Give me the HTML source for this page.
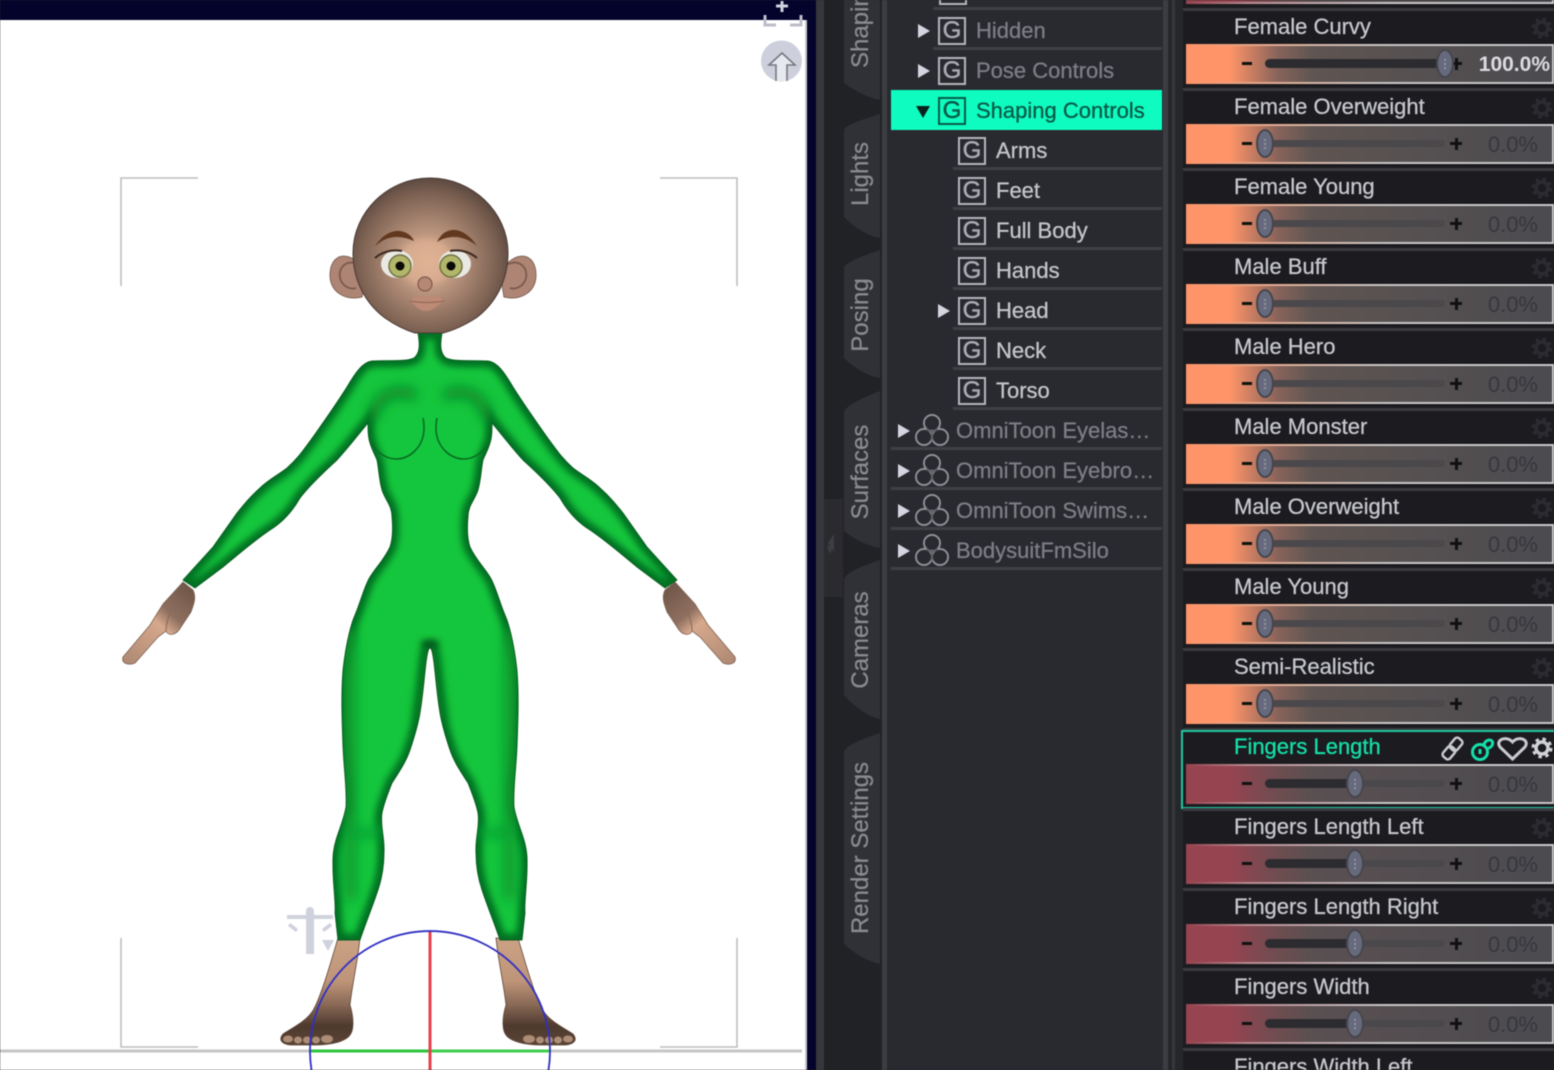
<!DOCTYPE html>
<html><head><meta charset="utf-8"><style>
html,body{margin:0;padding:0;width:1554px;height:1070px;overflow:hidden;background:#26272b}
*{box-sizing:border-box}
body{position:relative;font-family:"Liberation Sans",sans-serif}
#w{position:absolute;left:0;top:0;width:1554px;height:1070px;overflow:hidden;filter:blur(.55px)}
.a{position:absolute}
.tab{position:absolute;left:861px;color:#8a8b91;font-size:24px;white-space:nowrap;transform:translate(-50%,-50%) rotate(-90deg);-webkit-text-stroke:.25px #8a8b91}
.t{position:absolute;height:40px;left:891px;width:271px;color:#7d7e85;font-size:22px;line-height:41px;white-space:nowrap;-webkit-text-stroke:.3px currentColor}
.t .l{position:absolute;bottom:0;right:0;height:3px;background:#3e3f44}
.t .n{position:absolute;top:0}
.t .c{color:#c4c5ca}
.t .g{position:absolute;top:7px;width:28px;height:28px;border:2.5px solid #b5b6bd;color:#a9aab2;font-size:24px;line-height:23px;text-align:center;-webkit-text-stroke:.5px currentColor}
.t .ar{position:absolute;top:14px;width:0;height:0;border-left:12px solid #d4d5e0;border-top:7px solid transparent;border-bottom:7px solid transparent}
.r{position:absolute;left:1183px;width:371px;height:80px;background:#1b1b20;border-top:3px solid #3a3b40}
.r .n{position:absolute;left:51px;top:2px;font-size:22px;line-height:28px;color:#c6c7cc;white-space:nowrap;-webkit-text-stroke:.3px currentColor}
.r .b{position:absolute;left:3px;top:33px;width:368px;height:40px;padding:2px;background:linear-gradient(90deg,#ff9468 0,#e8a585 60px,#c8c8c8 200px)}
.r .b i{display:block;height:36px;background:linear-gradient(90deg,#ff9468 0,#ff9468 42px,#86635a 90px,#5f5552 125px,#4b4b50 100%)}
.f .b{background:linear-gradient(90deg,#964450 0,#b88a8e 60px,#c8c8c8 200px)}
.f .b i{background:linear-gradient(90deg,#964450 0,#964450 42px,#6e4d50 90px,#5a5052 125px,#4b4b50 100%)}
.tr{position:absolute;left:82px;top:49px;width:180px;height:7px;border-radius:4px;background:#4a484b}
.on{position:absolute;left:82px;top:48px;height:9px;border-radius:5px;background:#2c2c30}
.k{position:absolute;top:38px;width:18px;height:29px;margin-left:-9px;border-radius:50%;background:#666a7c;border:2px solid #45464e}
.k:after{content:"";position:absolute;left:6px;top:8px;height:10px;border-left:2px dotted #8f93a4}
.mi{position:absolute;left:59px;top:51px;width:10px;height:3px;background:#111}
.pl{position:absolute;left:267px;top:51px;width:12px;height:3px;background:#111}
.pl:after{content:"";position:absolute;left:4.5px;top:-4.5px;width:3px;height:12px;background:#111}
.v{position:absolute;right:16px;top:41px;font-size:22px;line-height:26px;color:#36363c}
.ge{position:absolute;right:1px;top:6px;width:22px;height:22px;color:#2b2b31}
</style></head><body><div id="w">
<svg class="a" style="left:0;top:0" width="0" height="0"><defs>
<symbol id="gr" viewBox="0 0 34 34"><g fill="none" stroke="#909198" stroke-width="2"><circle cx="17" cy="10" r="8"/><circle cx="9" cy="24" r="8"/><circle cx="25" cy="24" r="8"/></g><g fill="#292a2f"><circle cx="17" cy="10" r="7"/><circle cx="9" cy="24" r="7"/><circle cx="25" cy="24" r="7"/></g><path d="M17,18V28M11,16L17,19 23,16" fill="none" stroke="#55565c" stroke-width="1.500"/></symbol>
<symbol id="ge" viewBox="0 0 22 22"><circle cx="11" cy="11" r="6" fill="none" stroke="currentColor" stroke-width="3.5"/><circle cx="11" cy="11" r="9" fill="none" stroke="currentColor" stroke-width="3" stroke-dasharray="3.5 3.6"/></symbol>
<linearGradient id="sk" x1="0" x2="0" y1="938" y2="1045" gradientUnits="userSpaceOnUse"><stop offset="0" stop-color="#cca285"/><stop offset=".4" stop-color="#bf9579"/><stop offset=".62" stop-color="#8a6a56"/><stop offset=".82" stop-color="#4e3a2e"/><stop offset="1" stop-color="#5a4436"/></linearGradient>
<linearGradient id="hd" x1="190" x2="125" y1="585" y2="660" gradientUnits="userSpaceOnUse"><stop offset="0" stop-color="#6e5547"/><stop offset=".35" stop-color="#8f7060"/><stop offset=".5" stop-color="#d6a88c"/><stop offset="1" stop-color="#b08a74"/></linearGradient>
<radialGradient id="he" cx="428" cy="262" r="92" gradientUnits="userSpaceOnUse"><stop offset="0" stop-color="#dfb092"/><stop offset=".35" stop-color="#b6917b"/><stop offset=".75" stop-color="#7c6152"/><stop offset="1" stop-color="#4d3d37"/></radialGradient>
<path id="bd" d="M418,333 C420,345 420,353 414,358 C405,362 385,360 372,361 C362,362 354,375 347,387 C335,406 325,420 313,437 C302,452 298,458 287,468 C278,475 268,480 260,488 C250,497 245,503 237,513 L213,547 L183,580 L195,588 L223,567 C240,553 255,540 270,530 C283,522 292,512 300,498 C306,490 315,480 337,460 C348,448 358,435 368,423 C368,430 368,437 370,443 C372,450 375,455 377,460 C379,470 379,480 382,490 C385,500 392,505 392,517 C393,528 393,538 390,547 C384,560 376,567 370,577 C365,585 362,597 357,610 L353,620 C348,635 345,652 343,670 C341,695 342,720 343,747 C344,770 347,790 346,807 C343,825 334,838 333,857 C332,880 336,900 335,913 L338,940 L360,940 C365,925 372,908 378,890 C382,878 384,866 384,853 C385,838 380,826 382,813 C384,803 388,793 392,783 C399,772 406,762 410,750 C414,738 418,725 420,713 C423,695 424,680 426,663 C427,655 428,648 430,648 C432,648 433,655 434,663 C436,680 437,695 440,713 C442,725 446,738 450,750 C454,762 461,772 468,783 C472,793 476,803 478,813 C480,826 475,838 476,853 C476,866 478,878 482,890 C488,908 495,925 500,940 L522,940 L525,913 C524,900 528,880 527,857 C526,838 517,825 514,807 C513,790 516,770 517,747 C518,720 519,695 517,670 C515,652 512,635 507,620 L503,610 C498,597 495,585 490,577 C484,567 476,560 470,547 C467,538 467,528 468,517 C468,505 475,500 478,490 C481,480 481,470 483,460 C485,455 488,450 490,443 C492,437 492,430 492,423 C502,435 512,448 523,460 C545,480 554,490 560,498 C568,512 577,522 590,530 C605,540 620,553 637,567 L665,588 L677,580 L647,547 L623,513 C615,503 610,497 600,488 C592,480 582,475 573,468 C562,458 558,452 547,437 C535,420 525,406 513,387 C506,375 498,362 488,361 C475,360 455,362 446,358 C440,353 440,345 442,333 Z"/>
<clipPath id="bc"><use href="#bd"/></clipPath>
<filter id="b3" filterUnits="userSpaceOnUse" x="0" y="0" width="860" height="1070"><feGaussianBlur stdDeviation="3.5"/></filter>
<filter id="b5" filterUnits="userSpaceOnUse" x="0" y="0" width="860" height="1070"><feGaussianBlur stdDeviation="6"/></filter>
<g id="foot">
<path d="M338,938 L360,938 C358,960 352,985 350,1005 C354,1018 354,1030 350,1035 C345,1042 330,1045 315,1045 L290,1045 C282,1044 278,1040 283,1034 C292,1028 305,1022 312,1012 C320,1000 330,965 338,938Z" fill="url(#sk)" stroke="#5a4436" stroke-width=".8"/>
<g fill="#c9a68c" opacity=".75"><ellipse cx="288" cy="1039" rx="5" ry="3.500"/><ellipse cx="298" cy="1040" rx="4" ry="3.500"/><ellipse cx="307" cy="1040" rx="4" ry="3.500"/><ellipse cx="316" cy="1040" rx="4" ry="3.500"/><ellipse cx="327" cy="1039" rx="6" ry="4"/></g>
</g>
<g id="hand"><path d="M183,582 L193,590 C197,598 193,606 191,612 L181,627 C176,636 168,636 166,631 L158,637 L135,663 C128,666 121,663 123,657 L150,625 L163,604Z" fill="url(#hd)" stroke="#7d6252" stroke-width=".8"/><path d="M172,607C168,618 166,624 166,631" fill="none" stroke="#8a6a58"/></g>
<g id="ear"><path d="M366,272 C350,248 330,253 330,275 C330,292 345,301 362,297Z" fill="#ae8575" stroke="#806356" stroke-width="1"/><path d="M360,265 C346,258 338,268 340,278 C342,286 350,290 356,288" fill="none" stroke="#7c5a4e" stroke-width="1.800"/></g>
<g id="bre"><path d="M371,442 C377,454 388,459 396,459 C410,459 423,447 424,430 C424,426 424,422 423,418" fill="none" stroke="#0a6c22" stroke-width="1.600"/></g>
</defs></svg>

<!-- viewport -->
<div class="a" style="left:0;top:0;width:816px;height:1070px;background:#03032c"></div>
<div class="a" style="left:0;top:20px;width:807px;height:1050px;background:#fff;border-right:2px solid #c9c9cd"></div>
<svg class="a" style="left:0;top:0" width="816" height="1070">
<g fill="none" stroke="#bdbdc0" stroke-width="1.6">
<path d="M198,178H121V286"/><path d="M660,178H737V286"/><path d="M121,938V1047H198"/><path d="M737,938V1047H660"/>
</g>
<rect x="0" y="1049.500" width="802" height="3" fill="#c6c6c6"/>
<!-- small figure -->
<g fill="#cfd2dc"><rect x="306" y="912" width="8" height="42"/><circle cx="310" cy="911" r="4"/><rect x="287" y="915" width="46" height="4"/><path d="M290,923l8,6-2,3-8-6zM330,923l-8,6 2,3 8-6z"/><path d="M322,940h12l-6,11z"/></g>
<use href="#foot"/>
<use href="#foot" transform="translate(856,0) scale(-1,1)"/>
<use href="#hand"/>
<use href="#hand" transform="translate(858,0) scale(-1,1)"/>
<use href="#bd" fill="#14c63d"/>
<g clip-path="url(#bc)">
<use href="#bd" fill="none" stroke="#067024" stroke-width="13" filter="url(#b3)"/>
<path d="M350,630V900M510,630V900" fill="none" stroke="#0a9a2e" stroke-width="12" filter="url(#b5)"/>
<path d="M420,720Q427,680 430,648Q433,680 440,720" fill="none" stroke="#087a24" stroke-width="10" filter="url(#b5)"/>
<path d="M422,644H438" stroke="#06561a" stroke-width="7" filter="url(#b3)"/>
<path d="M372,420 C376,396 395,386 416,396M488,420 C484,396 465,386 444,396" fill="none" stroke="#0a8428" stroke-width="10" filter="url(#b5)"/>
<path d="M348,828C360,836 372,836 386,828M512,828C500,836 488,836 474,828" fill="none" stroke="#0e9e33" stroke-width="8" filter="url(#b5)"/>
</g>
<use href="#bd" fill="none" stroke="#0a5e1e" stroke-width=".9"/>
<use href="#bre"/><use href="#bre" transform="translate(860,0) scale(-1,1)"/>
<use href="#ear"/><use href="#ear" transform="translate(866,0) scale(-1,1)"/>
<!-- head -->
<path d="M430,178 C388,178 353,212 353,253 C353,280 365,303 385,318 C395,325 405,330 415,333 L443,333 C455,330 465,325 476,318 C496,303 508,280 508,253 C508,212 472,178 430,178 Z" fill="url(#he)" stroke="#4a3a34" stroke-width="1"/>
<ellipse cx="426" cy="262" rx="28" ry="24" fill="#e4b698" opacity=".6" filter="url(#b3)"/>
<path d="M375,246C382,235 392,230 400,231C407,232 412,236 414,241C407,238 402,237 396,237C388,237 381,241 375,246Z" fill="#62391f"/>
<path d="M477,246C470,235 460,229 452,230C444,231 440,236 437,242C443,238 449,237 455,237C463,237 471,241 477,246Z" fill="#62391f"/>
<ellipse cx="397" cy="264" rx="16" ry="14" fill="#e9e8e2"/><ellipse cx="455" cy="264" rx="16" ry="14" fill="#e9e8e2"/>
<circle cx="400" cy="266" r="11" fill="#b2b66a" stroke="#6f7440" stroke-width="1.500"/><circle cx="451" cy="266" r="11" fill="#b2b66a" stroke="#6f7440" stroke-width="1.500"/>
<circle cx="400" cy="266" r="4.500" fill="#0a0a08"/><circle cx="451" cy="266" r="4.500" fill="#0a0a08"/>
<path d="M375,258C382,252 392,249 402,251" fill="none" stroke="#3b2a20" stroke-width="2"/><path d="M477,258C470,252 460,249 450,251" fill="none" stroke="#3b2a20" stroke-width="2"/>
<circle cx="425" cy="284" r="7" fill="#b58876" stroke="#80594c" stroke-width="1.200"/>
<path d="M410,301C416,295 422,295 426,297C431,295 437,295 444,301C438,305 433,311 426,311C419,311 415,305 410,301Z" fill="#bd8a76"/>
<path d="M410,301C420,303 434,303 444,301" stroke="#8e6354" fill="none"/>
<!-- gizmo -->
<path d="M310,1051H550" stroke="#3fce4e" stroke-width="3"/><path d="M310,1051H430" stroke="#2cc33b" stroke-width="3"/>
<path d="M430,932V1070" stroke="#e8404c" stroke-width="3"/>
<path d="M311.500,1070A120,120 0 1 1 548.500,1070" fill="none" stroke="#3030c4" stroke-width="1.800"/>
<!-- top right icons -->
<path d="M782,1v11M776,6h12" stroke="#cfd2dc" stroke-width="3"/>
<path d="M765,15v10h11M801,15v10h-11" fill="none" stroke="#bcbec8" stroke-width="3"/>
<circle cx="781.500" cy="61" r="20.500" fill="#cdd0dc"/>
<path d="M776,81V65H769L782,53 795,65H787V81" fill="#e8e9f0" stroke="#77787f" stroke-width="1.600"/>
</svg>

<!-- tabs column -->
<div class="a" style="left:816px;top:0;width:8px;height:1070px;background:#36373c"></div>
<div class="a" style="left:824px;top:0;width:58px;height:1070px;background:#212226"></div>
<div class="a" style="left:824px;top:499px;width:19px;height:98px;background:#2a2a2f"></div>
<div class="a" style="left:882px;top:0;width:5px;height:1070px;background:#3c3d42"></div>
<svg class="a" style="left:824px;top:0" width="58" height="1070">
<g fill="#303136">
<path d="M20,0H56V100Q38,96 20,83Z"/>
<path d="M20,130Q20,125 56,114V238Q38,235 20,217Z"/>
<path d="M20,268Q20,262 56,250V378Q38,375 20,358Z"/>
<path d="M20,413Q20,405 56,391V548Q38,545 20,531Z"/>
<path d="M20,580Q20,572 56,560V719Q38,715 20,695Z"/>
<path d="M20,752Q20,745 56,733V964Q38,960 20,944Z"/>
</g>
<path d="M10,534l-6,9 6,9zM3,546l3,8 3-8z" fill="#3d3e44"/>
</svg>
<div class="tab" style="top:24px">Shaping</div>
<div class="tab" style="top:174px">Lights</div>
<div class="tab" style="top:315px">Posing</div>
<div class="tab" style="top:472px">Surfaces</div>
<div class="tab" style="top:640px">Cameras</div>
<div class="tab" style="top:848px">Render Settings</div>

<!-- tree -->
<div class="a" style="left:887px;top:0;width:276px;height:1070px;background:#292a2f"></div>
<div class="a" style="left:1163px;top:0;width:5px;height:1070px;background:#3c3d42"></div>
<div class="a" style="left:1168px;top:0;width:15px;height:1070px;background:#26272b"></div>
<div class="a" style="left:1172px;top:0;width:3px;height:1070px;background:#36373c"></div>
<div class="t" style="top:-30px"><div class="l" style="left:42px"></div><div class="g" style="left:48px"></div></div>
<div class="t" style="top:10px"><div class="l" style="left:42px"></div><div class="ar" style="left:27px"></div><div class="g" style="left:47px">G</div><div class="n" style="left:85px">Hidden</div></div>
<div class="t" style="top:50px"><div class="ar" style="left:27px"></div><div class="g" style="left:47px">G</div><div class="n" style="left:85px">Pose Controls</div></div>
<div class="t" style="top:90px;background:#0ffcc0;color:#075a48"><div class="ar" style="left:25px;top:16px;border:0;border-top:12px solid #07211c;border-left:7px solid transparent;border-right:7px solid transparent"></div><div class="g" style="left:47px;border-color:#075a48;color:#075a48">G</div><div class="n" style="left:85px">Shaping Controls</div></div>
<div class="t" style="top:130px"><div class="l" style="left:62px"></div><div class="g" style="left:67px">G</div><div class="n c" style="left:105px">Arms</div></div>
<div class="t" style="top:170px"><div class="l" style="left:62px"></div><div class="g" style="left:67px">G</div><div class="n c" style="left:105px">Feet</div></div>
<div class="t" style="top:210px"><div class="l" style="left:62px"></div><div class="g" style="left:67px">G</div><div class="n c" style="left:105px">Full Body</div></div>
<div class="t" style="top:250px"><div class="l" style="left:62px"></div><div class="g" style="left:67px">G</div><div class="n c" style="left:105px">Hands</div></div>
<div class="t" style="top:290px"><div class="l" style="left:62px"></div><div class="ar" style="left:47px"></div><div class="g" style="left:67px">G</div><div class="n c" style="left:105px">Head</div></div>
<div class="t" style="top:330px"><div class="l" style="left:62px"></div><div class="g" style="left:67px">G</div><div class="n c" style="left:105px">Neck</div></div>
<div class="t" style="top:370px"><div class="l" style="left:62px"></div><div class="g" style="left:67px">G</div><div class="n c" style="left:105px">Torso</div></div>
<div class="t" style="top:410px"><div class="l" style="left:0"></div><div class="ar" style="left:7px"></div><svg class="a" style="left:24px;top:3px" width="34" height="34"><use href="#gr"/></svg><div class="n" style="left:65px">OmniToon Eyelas…</div></div>
<div class="t" style="top:450px"><div class="l" style="left:0"></div><div class="ar" style="left:7px"></div><svg class="a" style="left:24px;top:3px" width="34" height="34"><use href="#gr"/></svg><div class="n" style="left:65px">OmniToon Eyebro…</div></div>
<div class="t" style="top:490px"><div class="l" style="left:0"></div><div class="ar" style="left:7px"></div><svg class="a" style="left:24px;top:3px" width="34" height="34"><use href="#gr"/></svg><div class="n" style="left:65px">OmniToon Swims…</div></div>
<div class="t" style="top:530px"><div class="l" style="left:0"></div><div class="ar" style="left:7px"></div><svg class="a" style="left:24px;top:3px" width="34" height="34"><use href="#gr"/></svg><div class="n" style="left:65px">BodysuitFmSilo</div></div>

<!-- sliders -->
<div class="r f" style="top:-72px"><div class="b"><i></i></div></div>
<div class="r" style="top:8px"><div class="n">Female Curvy</div><div class="b"><i></i></div><div class="mi"></div><div class="tr"></div><div class="pl"></div><div class="on" style="width:180px"></div><div class="k" style="left:262px"></div><div class="v" style="color:#dcdce0;font-weight:bold;right:4px;font-size:21px">100.0%</div><svg class="ge"><use href="#ge"/></svg></div>
<div class="r" style="top:88px"><div class="n">Female Overweight</div><div class="b"><i></i></div><div class="mi"></div><div class="tr"></div><div class="k" style="left:82px"></div><div class="pl"></div><div class="v">0.0%</div><svg class="ge"><use href="#ge"/></svg></div>
<div class="r" style="top:168px"><div class="n">Female Young</div><div class="b"><i></i></div><div class="mi"></div><div class="tr"></div><div class="k" style="left:82px"></div><div class="pl"></div><div class="v">0.0%</div><svg class="ge"><use href="#ge"/></svg></div>
<div class="r" style="top:248px"><div class="n">Male Buff</div><div class="b"><i></i></div><div class="mi"></div><div class="tr"></div><div class="k" style="left:82px"></div><div class="pl"></div><div class="v">0.0%</div><svg class="ge"><use href="#ge"/></svg></div>
<div class="r" style="top:328px"><div class="n">Male Hero</div><div class="b"><i></i></div><div class="mi"></div><div class="tr"></div><div class="k" style="left:82px"></div><div class="pl"></div><div class="v">0.0%</div><svg class="ge"><use href="#ge"/></svg></div>
<div class="r" style="top:408px"><div class="n">Male Monster</div><div class="b"><i></i></div><div class="mi"></div><div class="tr"></div><div class="k" style="left:82px"></div><div class="pl"></div><div class="v">0.0%</div><svg class="ge"><use href="#ge"/></svg></div>
<div class="r" style="top:488px"><div class="n">Male Overweight</div><div class="b"><i></i></div><div class="mi"></div><div class="tr"></div><div class="k" style="left:82px"></div><div class="pl"></div><div class="v">0.0%</div><svg class="ge"><use href="#ge"/></svg></div>
<div class="r" style="top:568px"><div class="n">Male Young</div><div class="b"><i></i></div><div class="mi"></div><div class="tr"></div><div class="k" style="left:82px"></div><div class="pl"></div><div class="v">0.0%</div><svg class="ge"><use href="#ge"/></svg></div>
<div class="r" style="top:648px"><div class="n">Semi-Realistic</div><div class="b"><i></i></div><div class="mi"></div><div class="tr"></div><div class="k" style="left:82px"></div><div class="pl"></div><div class="v">0.0%</div><svg class="ge"><use href="#ge"/></svg></div>
<div class="r f" style="top:728px"><div class="n" style="color:#15dfa9">Fingers Length</div><div class="b"><i></i></div><div class="mi"></div><div class="tr"></div><div class="on" style="width:90px"></div><div class="k" style="left:172px"></div><div class="pl"></div><div class="v">0.0%</div>
<svg class="a" style="left:255px;top:5px" width="94" height="28" fill="none">
<g transform="translate(14.5,12.5) rotate(-50)" stroke="#c9cad0" stroke-width="2.500"><rect x="-12" y="-4.500" width="13" height="9" rx="3"/><rect x="-1" y="-4.500" width="13" height="9" rx="3"/></g>
<circle cx="42" cy="16" r="7.500" stroke="#15dfa9" stroke-width="3"/><path d="M46,9C47,4 52,3 54,5C56,8 53,12 50,12M42,13v5" stroke="#15dfa9" stroke-width="3"/>
<path d="M74.500,23L62,11C57,4 68,-1 74.500,6C81,-1 92,4 87,11Z" stroke="#c9cad0" stroke-width="3"/>
</svg>
<svg class="ge" style="color:#d0d1d6"><use href="#ge"/></svg></div>
<div class="a" style="left:1181px;top:730px;width:373px;height:79px;border:2px solid #1fc9a0;border-right:0"></div>
<div class="r f" style="top:808px"><div class="n">Fingers Length Left</div><div class="b"><i></i></div><div class="mi"></div><div class="tr"></div><div class="on" style="width:90px"></div><div class="k" style="left:172px"></div><div class="pl"></div><div class="v">0.0%</div><svg class="ge"><use href="#ge"/></svg></div>
<div class="r f" style="top:888px"><div class="n">Fingers Length Right</div><div class="b"><i></i></div><div class="mi"></div><div class="tr"></div><div class="on" style="width:90px"></div><div class="k" style="left:172px"></div><div class="pl"></div><div class="v">0.0%</div><svg class="ge"><use href="#ge"/></svg></div>
<div class="r f" style="top:968px"><div class="n">Fingers Width</div><div class="b"><i></i></div><div class="mi"></div><div class="tr"></div><div class="on" style="width:90px"></div><div class="k" style="left:172px"></div><div class="pl"></div><div class="v">0.0%</div><svg class="ge"><use href="#ge"/></svg></div>
<div class="r f" style="top:1048px;height:22px;overflow:hidden"><div class="n" style="height:19px;overflow:hidden">Fingers Width Left</div></div>
</div></body></html>
